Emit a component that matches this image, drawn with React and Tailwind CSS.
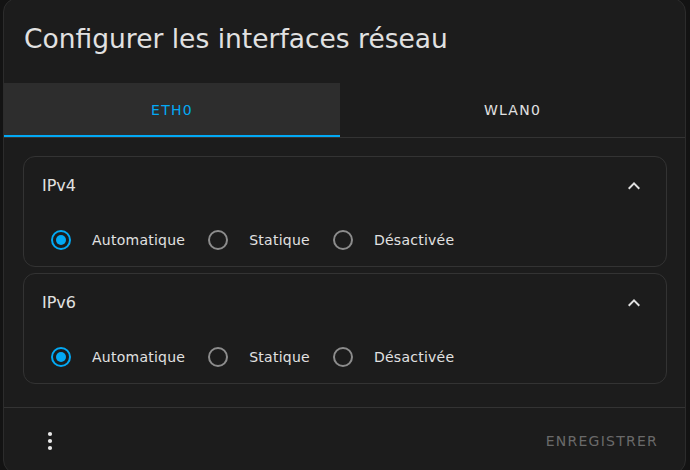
import React from "react";

const font = { fontFamily: '"DejaVu Sans", sans-serif' };

function Radio({ checked }) {
  return (
    <div className="w-[40px] h-[40px] flex items-center justify-center shrink-0">
      {checked ? (
        <div className="w-[20px] h-[20px] rounded-full border-2 border-[#03a9f4] flex items-center justify-center">
          <div className="w-[10px] h-[10px] rounded-full bg-[#03a9f4]" />
        </div>
      ) : (
        <div className="w-[20px] h-[20px] rounded-full border-2 border-[#8c8c8c]" />
      )}
    </div>
  );
}

function Option({ label, checked }) {
  return (
    <div className="flex items-center">
      <Radio checked={checked} />
      <span className="pl-[11px] pr-[13px] text-[14px] tracking-[0.25px] text-[#e1e1e1]">{label}</span>
    </div>
  );
}

function Panel({ title }) {
  return (
    <div className="h-[111px] rounded-[12px] border border-[#333333] flex flex-col">
      <div className="h-[57px] pt-[1px] flex items-center justify-between pl-[18px] pr-[20px]">
        <span className="text-[16px] text-[#e1e1e1]">{title}</span>
        <svg width="24" height="24" viewBox="0 0 24 24" className="text-[#e1e1e1]">
          <path fill="currentColor" d="M7.41,15.41L12,10.83L16.59,15.41L18,14L12,8L6,14L7.41,15.41Z" />
        </svg>
      </div>
      <div className="mt-[6px] h-[40px] flex items-center pl-[17px]">
        <Option label="Automatique" checked />
        <Option label="Statique" />
        <Option label="Désactivée" />
      </div>
    </div>
  );
}

export default function App() {
  return (
    <div className="w-[690px] h-[470px] bg-[#131313] overflow-hidden" style={font}>
      <div className="ml-[3px] mt-[-2px] w-[683px] h-[476px] bg-[#1c1c1c] border border-[#2c2c2c] rounded-[14px] flex flex-col">
        <div className="h-[85px] flex items-center pl-[20px] pb-[4px]">
          <h1 className="text-[26.5px] text-[#e1e1e1] font-normal">Configurer les interfaces réseau</h1>
        </div>
        <div className="flex border-b border-[#333333]">
          <div className="w-[336px] h-[54px] pt-[3px] bg-[#2d2d2d] border-b-2 border-[#03a9f4] flex items-center justify-center">
            <span className="text-[14px] tracking-[1.25px] text-[#03a9f4]">ETH0</span>
          </div>
          <div className="flex-1 h-[54px] pt-[3px] border-b-2 border-transparent flex items-center justify-center">
            <span className="text-[14px] tracking-[1.25px] text-[#e1e1e1]">WLAN0</span>
          </div>
        </div>
        <div className="px-[19px] pt-[18px] pb-[23px] flex flex-col gap-[6px] pr-[18px]">
          <Panel title="IPv4" />
          <Panel title="IPv6" />
        </div>
        <div className="border-t border-[#333333] h-[66px] flex items-center justify-between pl-[34px] pr-[27px]">
          <svg width="24" height="24" viewBox="0 0 24 24" className="text-[#e8e8e8]">
            <circle cx="12" cy="5" r="2.1" fill="currentColor" />
            <circle cx="12" cy="12" r="2.1" fill="currentColor" />
            <circle cx="12" cy="19" r="2.1" fill="currentColor" />
          </svg>
          <span className="pt-[2px] text-[14px] tracking-[1.25px] text-[#6a6a6a]">ENREGISTRER</span>
        </div>
      </div>
    </div>
  );
}
